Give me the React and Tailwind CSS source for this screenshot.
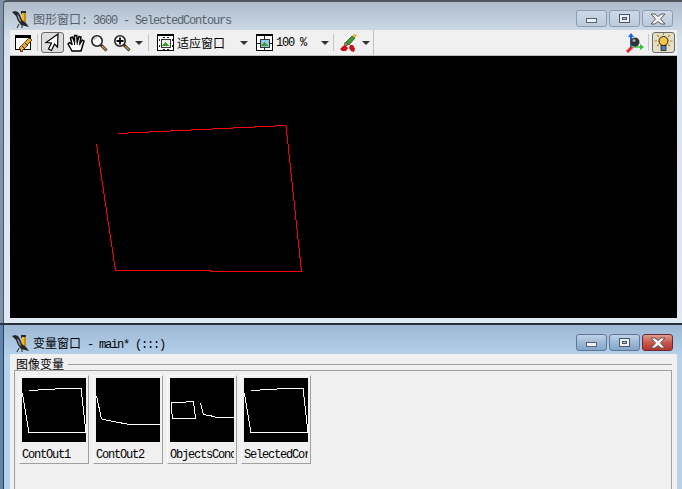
import React from "react";

const LATIN = "font-['Liberation_Mono',monospace] tracking-[-1.2px]";
const CJK = "font-['Noto_Sans_CJK_SC',sans-serif]";

/* ---------------- ICONS ---------------- */

const BirdIcon = () => (
  <svg width="18" height="18" viewBox="0 0 18 18" className="shrink-0">
    <rect x="9" y="1" width="5" height="3" fill="#2a2a2a" />
    <rect x="10" y="3" width="4" height="9" fill="#f0b818" />
    <rect x="12" y="3" width="2" height="9" fill="#c88a10" />
    <path d="M0 2 L3 1 L6 2 L8 5 L10 10 L14 13 L17 17 L13 16 L9 15 L6 11 L4 6 L2 4 Z" fill="#262626" />
    <path d="M5 4 L7 6 L9 11 L8 12 L6 8 Z" fill="#8b929a" />
    <path d="M7 14 L5 18 M10 15 L10 18" stroke="#222" strokeWidth="1" />
  </svg>
);

const EditIcon = () => (
  <svg width="18" height="18" viewBox="0 0 18 18" shapeRendering="crispEdges">
    <rect x="0.5" y="1.5" width="15" height="14" fill="#fff" stroke="#000" />
    <rect x="0" y="1" width="16" height="3" fill="#000" />
    <path d="M4 14 L14 4 L17 6 L8 16 L7 18 L5 17 L5 15 Z" fill="#e8a828" stroke="#3a2a10" strokeWidth="0.8" />
    <path d="M7 12 L10 15 M10 9 L13 12" stroke="#3a2a10" strokeWidth="1" />
  </svg>
);

const ArrowIcon = () => (
  <svg width="19" height="19" viewBox="0 0 19 19">
    <path d="M15 1 L14.5 14 L11.5 11 L8.5 17.5 L5.5 16 L8.5 10 L3 9.5 Z" fill="#fff" stroke="#000" strokeWidth="1.2" strokeLinejoin="miter" />
  </svg>
);

const HandIcon = () => (
  <svg width="18" height="18" viewBox="0 0 18 18">
    <path
      d="M5 17 L1 10 L2.5 8.5 L5 10.5 L3.5 4 L5.5 3 L7.5 8 L7.5 1.5 L9.8 1.5 L10.2 8 L12 2.5 L14 3 L12.8 9.5 L15.5 6 L17 7 L14 17 Z"
      fill="#fff"
      stroke="#000"
      strokeWidth="1.5"
      strokeLinejoin="round"
    />
    <path d="M7.5 8 V11 M10.2 8 V11 M12.8 9.5 V11.5" stroke="#000" strokeWidth="1" />
  </svg>
);

const LensIcon = ({ plus }) => (
  <svg width="18" height="18" viewBox="0 0 18 18">
    <circle cx="7" cy="7" r="5.2" fill="#fff" stroke="#222" strokeWidth="1.6" />
    {!plus && <path d="M4 6 A3.5 3.5 0 0 1 7 3.5" fill="none" stroke="#a8c4de" strokeWidth="1.4" />}
    <path d="M11 11 L16.5 16.5" stroke="#2a2a2a" strokeWidth="3" />
    <path d="M12 12 L16 16" stroke="#c89a50" strokeWidth="1.2" />
    {plus && <path d="M3.5 7 H10.5 M7 3.5 V10.5" stroke="#000" strokeWidth="1.8" />}
  </svg>
);

const Caret = () => <span className="block w-0 h-0 border-x-[4px] border-x-transparent border-t-[4px] border-t-[#333]" />;

const FitIcon = ({ picture }) => (
  <svg width="17" height="17" viewBox="0 0 17 17" shapeRendering="crispEdges" className="shrink-0">
    <rect x="0.5" y="0.5" width="16" height="16" fill="#fff" stroke="#000" />
    <rect x="0" y="0" width="17" height="2" fill="#000" />
    <rect x="4" y="5" width="9" height="8" fill={picture ? "#8fc8e8" : "#e8f0e8"} stroke="#333" />
    <path d="M5 12 L8 8 L12 12 Z" fill="#3f9a2f" />
    {picture ? (
      <path d="M1 9 H4 M13 9 H16 M8.5 2 V5 M8.5 13 V16" stroke="#222" />
    ) : (
      <path d="M2 5 V7 M2 11 V13 M15 5 V7 M15 11 V13 M6 3 H8 M10 3 H12 M6 15 H8 M10 15 H12" stroke="#222" />
    )}
  </svg>
);

const PaintIcon = () => (
  <svg width="18" height="18" viewBox="0 0 18 18" className="shrink-0">
    <path d="M6 8 L12 2 L15 4 L9 11 Z" fill="#3f9a2f" stroke="#123010" strokeWidth="0.6" />
    <path d="M5 8 L8 11 L6 12 L4 12 Z" fill="#b07a40" stroke="#3a2a10" strokeWidth="0.5" />
    <path d="M0 15 L3 12 L6 12 L8 14 L6 17 L2 17 Z M10 11 L13 11 L15 15 L14 18 L11 17 L9 14 Z" fill="#c8101a" />
    <path d="M13 0 L15 1 L17 0 L16 3 L13 3 Z" fill="#f0b020" />
  </svg>
);

const AxisIcon = () => (
  <svg width="18" height="20" viewBox="0 0 18 20" className="shrink-0">
    <path d="M5 14 V3" stroke="#1565e0" strokeWidth="2" />
    <path d="M2 4 L5 0 L8 4 Z" fill="#1565e0" />
    <path d="M5 14 H15" stroke="#30c040" strokeWidth="1.5" />
    <path d="M14 11 L18 14 L14 17 Z" fill="#30c040" />
    <path d="M6 14 L1 19" stroke="#f02030" strokeWidth="3" />
    <circle cx="9" cy="9" r="4.5" fill="#333" />
    <circle cx="8" cy="7.5" r="1.5" fill="#aaa" />
  </svg>
);

const BulbIcon = () => (
  <svg width="19" height="19" viewBox="0 0 19 19">
    <circle cx="9.5" cy="8" r="4.5" fill="#f8c840" stroke="#222" strokeWidth="1" />
    <rect x="7" y="12.5" width="5" height="5" fill="#5878b0" stroke="#222" strokeWidth="0.8" />
    <path d="M9.5 0 V2 M3 2 L5 4 M16 2 L14 4 M0.5 8 H3 M16 8 H18.5 M3 13 L5 11.5 M16 13 L14 11.5" stroke="#b88a20" strokeWidth="1.2" />
  </svg>
);

const CloseIcon = () => (
  <svg width="16" height="12" viewBox="0 0 16 12">
    <path d="M1 1 H5 L8 3.5 L11 1 H15 L10.5 6 L15 11 H11 L8 8.5 L5 11 H1 L5.5 6 Z" fill="#f4f4f4" stroke="#5a5a5a" strokeWidth="1" />
  </svg>
);

/* ---------------- TITLE BAR ---------------- */

const CaptionButton = ({ kind, danger, dim }) => (
  <div
    className={`w-[31px] h-[17px] rounded-[3px] border flex items-center justify-center ${
      danger
        ? "border-[#6a2a35] bg-[linear-gradient(#e39a8c,#c9584c_50%,#b8352c)]"
        : dim
          ? "border-[#8b9cb8] bg-[linear-gradient(#cdd9e7,#bccadb)]"
          : "border-[#5f7699] bg-[linear-gradient(#c0d3e6,#9db9d6_50%,#84a6c9)]"
    }`}
  >
    {kind === "min" && <span className="w-[11px] h-[5px] mt-[3px] bg-[#eef1f4] border border-[#53627a]" />}
    {kind === "max" && (
      <span className="w-[11px] h-[9px] border border-[#46556e] bg-[#eef1f4] flex items-center justify-center">
        <span className="w-[5px] h-[3px] border border-[#46556e] bg-[#b9c6d6]" />
      </span>
    )}
    {kind === "close" && <CloseIcon />}
  </div>
);

const TitleBar = ({ cjk, latin, inactive }) => (
  <div className="h-[21px] shrink-0 flex items-start pt-[1px] pl-[2px] pr-[4px] gap-[3px]">
    <BirdIcon />
    <span className={`mt-[2px] text-[12px] leading-[14px] whitespace-pre ${inactive ? "text-[#56616e]" : "text-black"}`}>
      <span className={CJK}>{cjk}</span>
      <span className={LATIN}>{latin}</span>
    </span>
    <div className="ml-auto flex gap-[2px]">
      <CaptionButton kind="min" dim={inactive} />
      <CaptionButton kind="max" dim={inactive} />
      <CaptionButton kind="close" dim={inactive} danger={!inactive} />
    </div>
  </div>
);

/* ---------------- TOOLBAR ---------------- */

const Sep = ({ className }) => <span className={`w-px h-[17px] bg-[#c8c8c8] shrink-0 ${className}`} />;

const Toolbar = () => (
  <div className="h-[26px] shrink-0 bg-[#f0f0f0] border-b border-[#bdbdbd] flex items-center pl-[5px] pr-[2px] text-black">
    <EditIcon />
    <Sep className="ml-[4px]" />
    <div className="ml-[3px] w-[23px] h-[21px] rounded-[3px] border border-[#6a6a6a] bg-[#dedede] flex items-center justify-center"><ArrowIcon /></div>
    <div className="ml-[3px]"><HandIcon /></div>
    <div className="ml-[5px]"><LensIcon /></div>
    <div className="ml-[5px]"><LensIcon plus /></div>
    <div className="ml-[4px] mt-[1px]"><Caret /></div>
    <Sep className="ml-[5px]" />
    <div className="ml-[8px] flex"><FitIcon /></div>
    <span className={`ml-[3px] w-[48px] text-[12px] leading-[14px] whitespace-pre ${CJK}`}>适应窗口</span>
    <div className="ml-[15px] mt-[1px]"><Caret /></div>
    <div className="ml-[8px] flex"><FitIcon picture /></div>
    <span className={`ml-[3px] w-[30px] text-[12px] leading-[14px] whitespace-pre ${LATIN}`}>100 %</span>
    <div className="ml-[15px] mt-[1px]"><Caret /></div>
    <Sep className="ml-[4px]" />
    <div className="ml-[6px] flex"><PaintIcon /></div>
    <div className="ml-[4px] mt-[1px]"><Caret /></div>
    <span className="w-px h-[25px] bg-[#c0c0c0] ml-[3px]" />
    <div className="ml-auto flex items-center">
      <AxisIcon />
      <Sep className="ml-[4px]" />
      <div className="ml-[3px] w-[23px] h-[21px] rounded-[3px] border border-[#6a6a6a] bg-[#e6dfc8] flex items-center justify-center"><BulbIcon /></div>
    </div>
  </div>
);

/* ---------------- THUMBNAILS ---------------- */

const quad = "M7 13 L16 12 L33 11 L50 10.5 L59 10 L64 54.5 L7 54.5 L0.5 15.5";

const shapes = {
  ContOut1: [quad],
  ContOut2: ["M0.5 18 L5.5 41 L17 43.5 L34 46.5 L64 46.5"],
  ObjectsConc: ["M1 25 L2.5 40.5 L25.5 40.5 L23.5 23.5 L1 25", "M30.5 25.5 L33.5 36.5 L41.5 38 L46.5 39.5 L64 39.5"],
  SelectedCor: [quad],
};

const Thumb = ({ name }) => (
  <div className="w-[70px] h-[89px] shrink-0 border border-t-[#f8f8f8] border-l-[#f8f8f8] border-b-[#a0a0a0] border-r-[#a0a0a0] bg-[#f0f0f0] pl-[2px] pt-[2px]">
    <svg width="64" height="64" viewBox="0 0 64 64" shapeRendering="crispEdges" className="block bg-black">
      {shapes[name].map((d) => (
        <path key={d} d={d} fill="none" stroke="#fff" strokeWidth="1" />
      ))}
    </svg>
    <div className={`mt-[6px] text-[12px] leading-[14px] whitespace-nowrap overflow-hidden w-[64px] text-black ${LATIN}`}>{name}</div>
  </div>
);

/* ---------------- APP ---------------- */

const App = () => {
  return (
    <div className="w-[682px] h-[489px] overflow-hidden flex flex-col bg-[#28303a]">
      {/* graphics window */}
      <div className="h-[323px] shrink-0 bg-[#7f93aa] pl-[3px]">
        <div className="h-full flex flex-col pl-[6px] pr-[5px] pb-[5px] pt-[7px] border-t-2 border-l border-[#50565f] rounded-tl-[4px] bg-[linear-gradient(#aebccb,#d6e2ee_12%,#dfe9f3)]">
          <TitleBar cjk="图形窗口" latin=": 3600 - SelectedContours" inactive />
          <Toolbar />
          <div className="flex-1 bg-black">
            <svg width="667" height="261" viewBox="0 0 667 261" shapeRendering="crispEdges" className="block">
              <path d="M108 77.5 L276 69.5 L291.5 215.5 L200 215.5 L200 214.5 L105.5 214.5 L86.5 88" fill="none" stroke="#ff0000" strokeWidth="1" />
            </svg>
          </div>
        </div>
      </div>

      <div className="h-[2px] shrink-0" />

      {/* variable window */}
      <div className="flex-1 min-h-0 bg-[#5f84ad] pl-[3px]">
        <div className="h-full flex flex-col pl-[6px] pr-[5px] pt-[8px] border-l border-[#2f3d50] bg-[linear-gradient(#9db8d3,#b7d2ec_20%)]">
          <TitleBar cjk="变量窗口" latin=" - main* (:::)" />
          <div className="flex-1 min-h-0 bg-[#f0f0f0] overflow-hidden">
            <div className="h-[16px] flex items-start pt-[4px] pl-[6px]">
              <span className={`text-[12px] leading-[12px] text-black whitespace-pre ${CJK}`}>图像变量</span>
              <span className="flex-1 h-px mt-[6px] bg-[#a0a0a0] ml-[4px] mr-[5px]" />
            </div>
            <div className="h-[140px] ml-[4px] mr-[5px] border border-[#a0a0a0] pl-[4px] pt-[4px] flex items-start gap-[4px]">
              <Thumb name="ContOut1" />
              <Thumb name="ContOut2" />
              <Thumb name="ObjectsConc" />
              <Thumb name="SelectedCor" />
            </div>
          </div>
        </div>
      </div>
    </div>
  );
};

export default App;
